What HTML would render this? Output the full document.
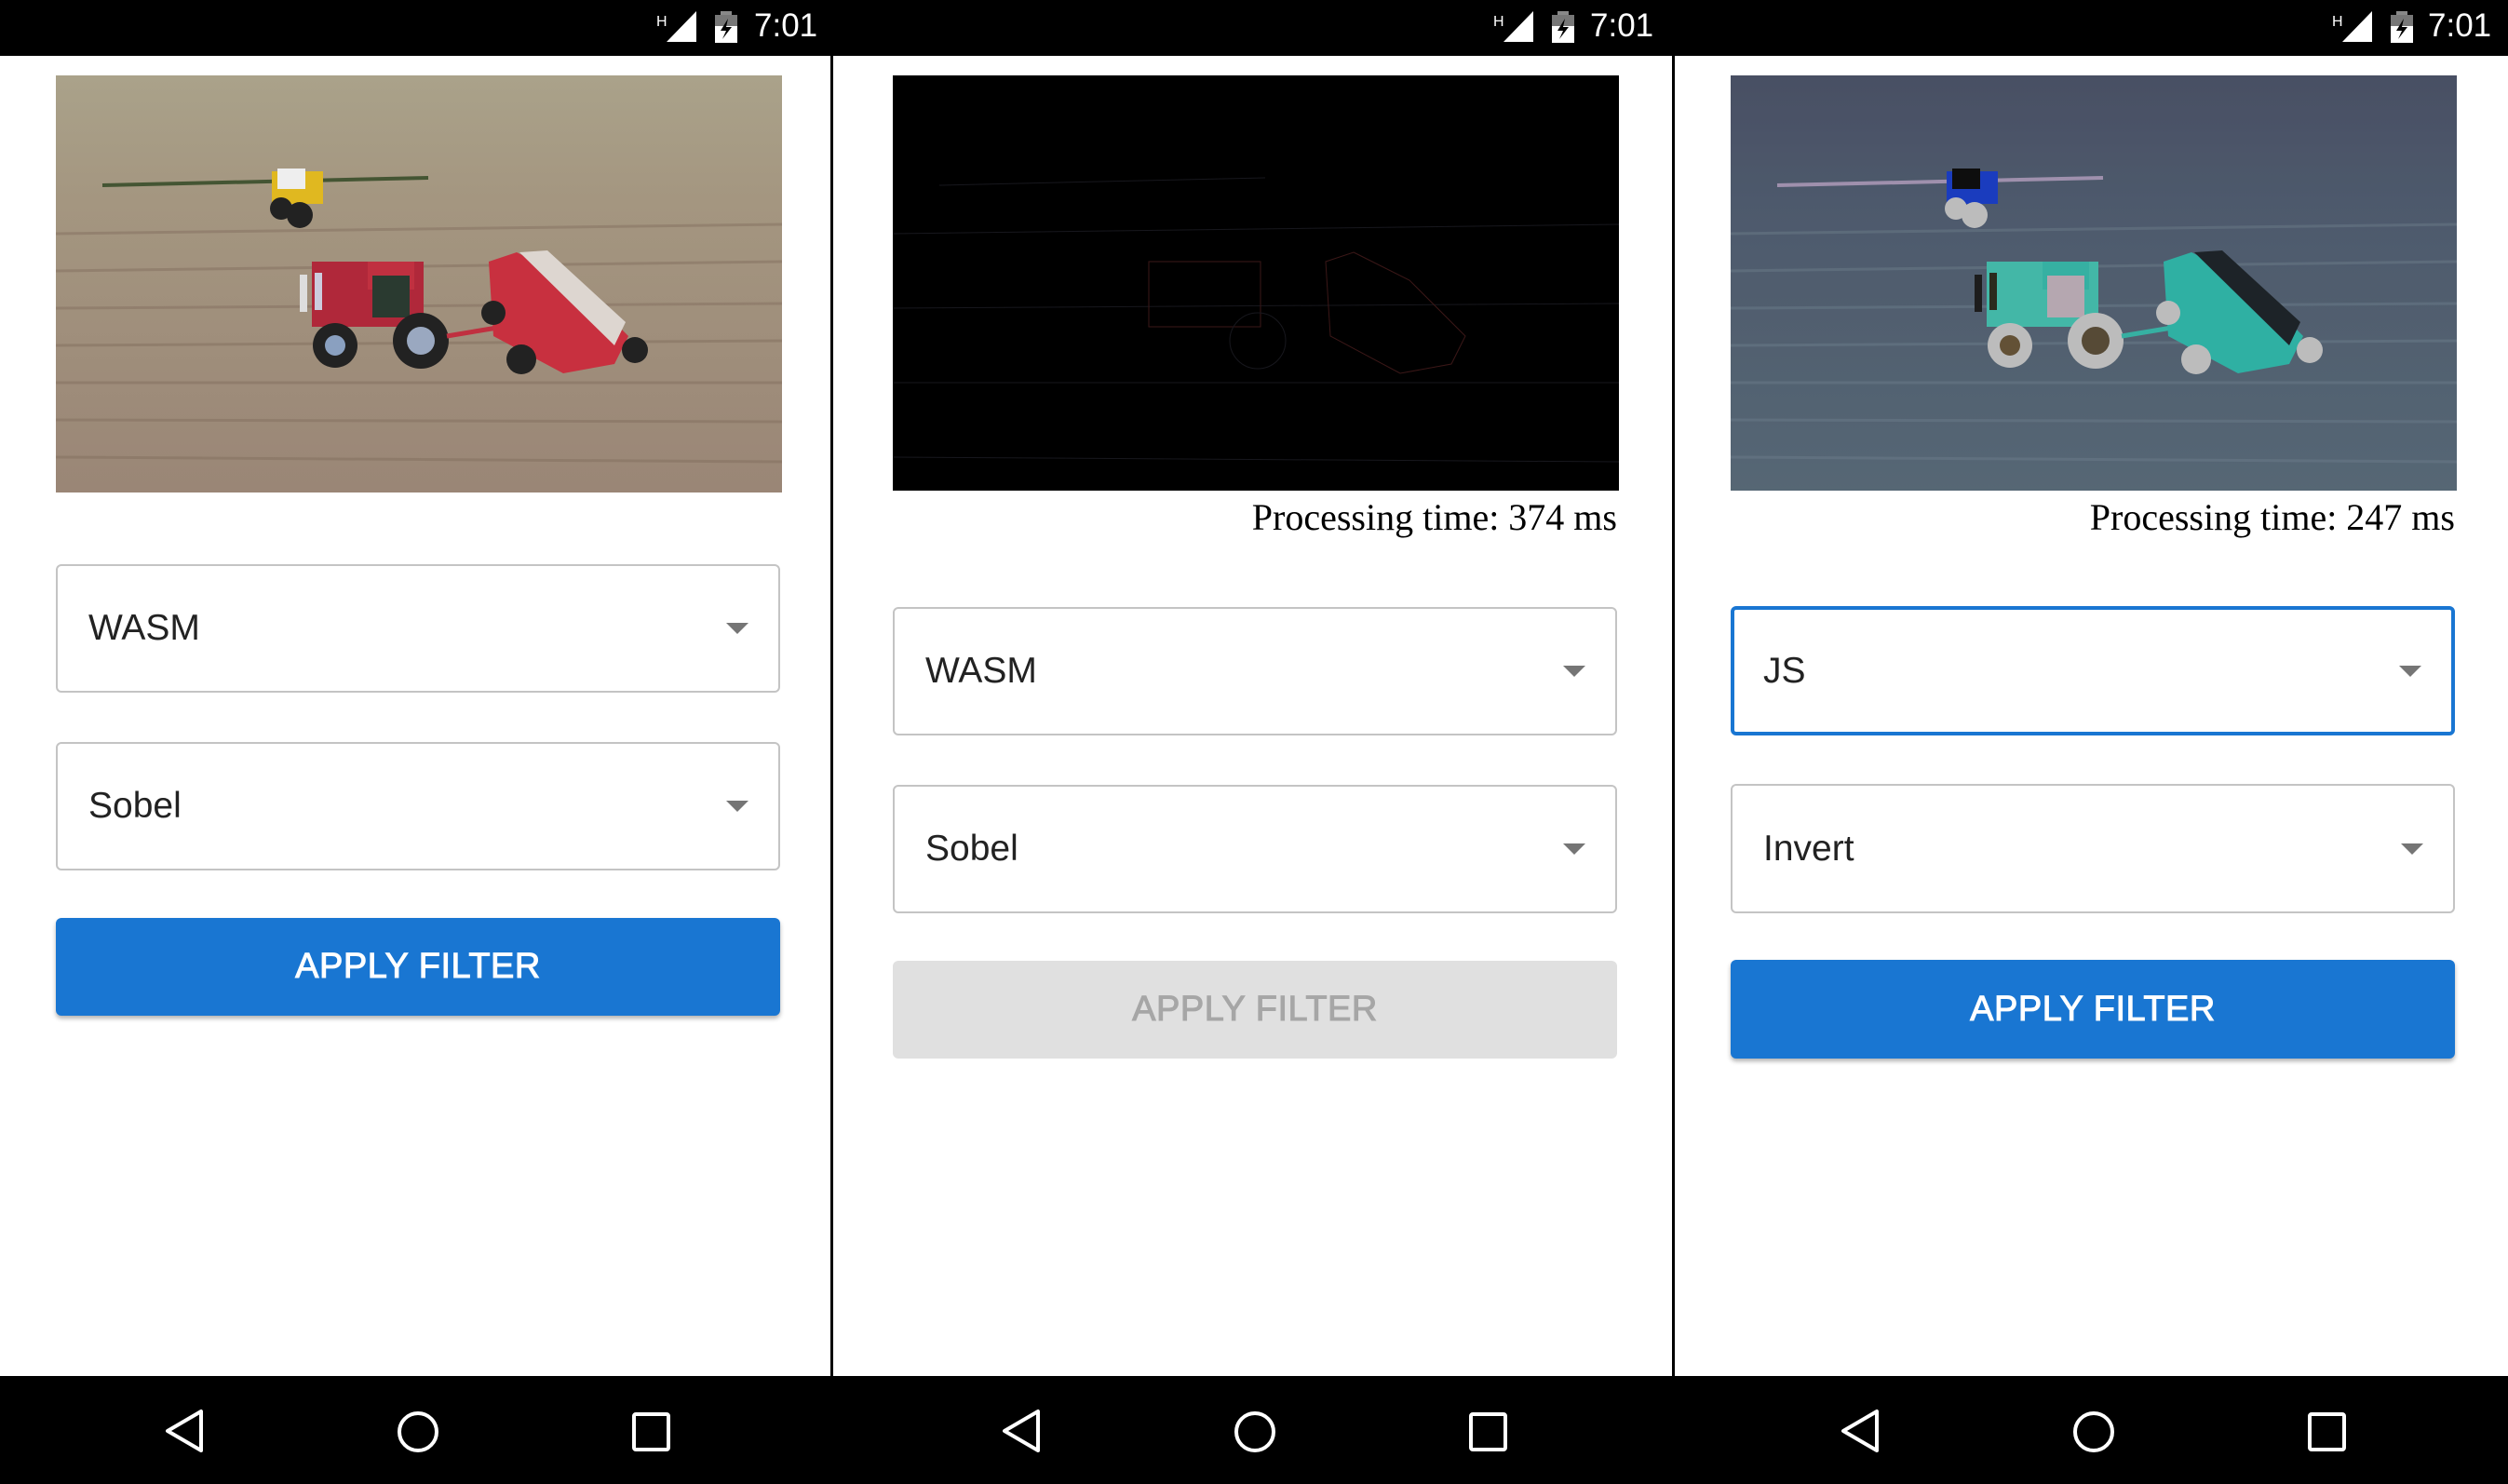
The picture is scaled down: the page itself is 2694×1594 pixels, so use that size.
<!DOCTYPE html>
<html><head><meta charset="utf-8">
<style>
*{margin:0;padding:0;box-sizing:border-box}
body{width:2694px;height:1594px;position:relative;background:#fff;overflow:hidden;font-family:"Liberation Sans",sans-serif}
.sb{position:absolute;top:0;left:0;width:2694px;height:60px;background:#000}
.nb{position:absolute;top:1478px;left:0;width:2694px;height:116px;background:#000}
.div{position:absolute;top:60px;width:3px;height:1418px;background:#000}
.img{position:absolute;width:780px;height:448px;overflow:hidden}
.img svg{display:block;width:780px;height:448px}
.pt{position:absolute;width:780px;text-align:right;font-family:"Liberation Serif",serif;font-size:40px;color:#000;line-height:1}
.dd{position:absolute;width:778px;border:2px solid #c4c4c4;border-radius:6px;font-size:39px;color:#222;padding-left:33px;display:flex;align-items:center}
.dd.f{border:4px solid #1976d2;padding-left:31px}
.dd:after{content:"";position:absolute;right:32px;top:50%;margin-top:-6px;border-left:12px solid transparent;border-right:12px solid transparent;border-top:12px solid #757575}
.btn{position:absolute;width:778px;height:106px;border-radius:6px;background:#1976d2;color:#fff;font-size:38px;font-weight:normal;-webkit-text-stroke:1px #fff;letter-spacing:0.5px;display:flex;align-items:center;justify-content:center;box-shadow:0 3px 5px rgba(0,0,0,.3)}
.btn.d{background:#e0e0e0;color:#a6a6a6;-webkit-text-stroke:1px #a6a6a6;box-shadow:none}
.time{position:absolute;top:8px;color:#fff;font-size:35px}
</style></head><body>
<svg width="0" height="0" style="position:absolute">
<defs>
<linearGradient id="fg" x1="0" y1="0" x2="0" y2="1">
<stop offset="0" stop-color="#aaa28a"/><stop offset=".3" stop-color="#a49680"/><stop offset="1" stop-color="#9a8676"/>
</linearGradient>
<g id="scene">
<rect width="780" height="448" fill="url(#fg)"/>
<g stroke="#806c5c" stroke-width="3" opacity=".45">
<line x1="0" y1="170" x2="780" y2="160"/><line x1="0" y1="210" x2="780" y2="200"/><line x1="0" y1="250" x2="780" y2="245"/><line x1="0" y1="290" x2="780" y2="285"/><line x1="0" y1="330" x2="780" y2="330"/><line x1="0" y1="370" x2="780" y2="372"/><line x1="0" y1="410" x2="780" y2="415"/>
</g>
<line x1="50" y1="118" x2="400" y2="110" stroke="#445533" stroke-width="4"/>
<rect x="232" y="103" width="55" height="35" fill="#e0b820"/>
<rect x="238" y="100" width="30" height="22" fill="#eee"/>
<circle cx="242" cy="143" r="12" fill="#222"/><circle cx="262" cy="150" r="14" fill="#222"/>
<rect x="275" y="200" width="120" height="70" fill="#b0283a"/>
<rect x="335" y="200" width="50" height="30" fill="#c03040"/>
<rect x="340" y="215" width="40" height="45" fill="#2a3a30"/>
<circle cx="300" cy="290" r="24" fill="#222"/><circle cx="300" cy="290" r="11" fill="#8aa0c0"/>
<circle cx="392" cy="285" r="30" fill="#222"/><circle cx="392" cy="285" r="15" fill="#9aa8c0"/>
<rect x="262" y="214" width="8" height="40" fill="#ddd"/><rect x="278" y="212" width="8" height="40" fill="#ccd"/>
<line x1="420" y1="280" x2="480" y2="270" stroke="#c03040" stroke-width="5"/>
<polygon points="495,190 555,220 615,280 600,310 545,320 470,280 465,200" fill="#c8303f"/>
<polygon points="498,190 528,188 612,265 600,290" fill="#ddd6d0"/>
<circle cx="500" cy="305" r="16" fill="#222"/><circle cx="622" cy="295" r="14" fill="#222"/><circle cx="470" cy="255" r="13" fill="#222"/>
</g>
</defs></svg>

<div class="sb"></div>
<div class="nb"></div>
<div class="div" style="left:892px"></div>
<div class="div" style="left:1796px"></div>

<svg style="position:absolute;top:0;left:0" width="2694" height="60">
<g id="sti">
<text x="705" y="28" fill="#fff" font-size="16" font-family="Liberation Sans">H</text>
<polygon points="716,45 748,12 748,45" fill="#fff"/>
<rect x="768" y="16" width="24" height="30" fill="#fff"/><rect x="774" y="12" width="12" height="5" fill="#888"/><rect x="768" y="16" width="24" height="12" fill="#777"/>
<polygon points="782,20 774,33 780,33 776,42 786,29 780,29" fill="#000"/>
</g>
<use href="#sti" x="899"/>
<use href="#sti" x="1800"/>
</svg>
<div class="time" style="left:810px">7:01</div>
<div class="time" style="left:1708px">7:01</div>
<div class="time" style="left:2608px">7:01</div>

<svg style="position:absolute;top:1478px;left:0" width="2694" height="116" fill="none" stroke="#fff" stroke-width="4" stroke-linejoin="round">
<g id="nv">
<polygon points="216,38 216,80 180,59"/>
<circle cx="449" cy="60" r="20"/>
<rect x="681" y="41" width="37" height="38" rx="2"/>
</g>
<use href="#nv" x="899"/>
<use href="#nv" x="1800"/>
</svg>

<div class="img" style="left:60px;top:81px"><svg viewBox="0 0 780 448"><use href="#scene"/></svg></div>
<div class="dd" style="left:60px;top:606px;height:138px">WASM</div>
<div class="dd" style="left:60px;top:797px;height:138px">Sobel</div>
<div class="btn" style="left:60px;top:986px;height:105px">APPLY FILTER</div>

<div class="img" style="left:959px;top:81px;background:#000;height:446px"><svg viewBox="0 0 780 448" style="opacity:.35"><g stroke="#445" stroke-width="1" fill="none"><line x1="0" y1="170" x2="780" y2="160"/><line x1="0" y1="250" x2="780" y2="245"/><line x1="0" y1="330" x2="780" y2="330"/><line x1="0" y1="410" x2="780" y2="415"/><rect x="275" y="200" width="120" height="70" stroke="#a44"/><circle cx="392" cy="285" r="30"/><polygon points="495,190 555,220 615,280 600,310 545,320 470,280 465,200" stroke="#a44"/><line x1="50" y1="118" x2="400" y2="110"/></g></svg></div>
<div class="pt" style="left:957px;top:536px">Processing time: 374 ms</div>
<div class="dd" style="left:959px;top:652px;height:138px">WASM</div>
<div class="dd" style="left:959px;top:843px;height:138px">Sobel</div>
<div class="btn d" style="left:959px;top:1032px;height:105px">APPLY FILTER</div>

<div class="img" style="left:1859px;top:81px;height:446px"><svg viewBox="0 0 780 448" style="filter:invert(1) brightness(.85)"><use href="#scene"/></svg></div>
<div class="pt" style="left:1857px;top:536px">Processing time: 247 ms</div>
<div class="dd f" style="left:1859px;top:651px;height:139px">JS</div>
<div class="dd" style="left:1859px;top:842px;height:139px">Invert</div>
<div class="btn" style="left:1859px;top:1031px;height:106px">APPLY FILTER</div>
</body></html>
